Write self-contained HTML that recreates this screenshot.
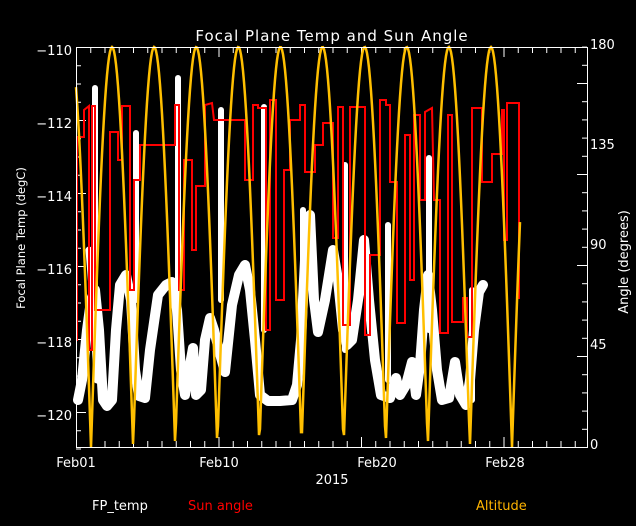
<!DOCTYPE html>
<html><head><style>
html,body{margin:0;padding:0;background:#000;width:636px;height:526px;overflow:hidden}
svg{display:block}
text{font-family:"DejaVu Sans","Liberation Sans",sans-serif;font-size:13px;fill:#fff}
</style></head><body>
<svg id="s" width="636" height="526" xmlns="http://www.w3.org/2000/svg">
<g id="ticks" stroke="#fff" stroke-width="1"></g>
<text x="332" y="41" text-anchor="middle" style="font-size:15px;letter-spacing:1px">Focal Plane Temp and Sun Angle</text>
<g text-anchor="end">
<text x="72" y="55">−110</text>
<text x="72" y="128">−112</text>
<text x="72" y="201">−114</text>
<text x="72" y="274">−116</text>
<text x="72" y="347">−118</text>
<text x="72" y="420">−120</text>
</g>
<text x="590" y="49">180</text>
<text x="590" y="149">135</text>
<text x="590" y="249">90</text>
<text x="590" y="349">45</text>
<text x="590" y="449">0</text>
<text transform="translate(25,238) rotate(-90)" text-anchor="middle" style="font-size:11.5px">Focal Plane Temp (degC)</text>
<text transform="translate(628,262) rotate(-90)" text-anchor="middle">Angle (degrees)</text>
<g text-anchor="middle">
<text x="76" y="467">Feb01</text>
<text x="219" y="467">Feb10</text>
<text x="377" y="467">Feb20</text>
<text x="505" y="467">Feb28</text>
<text x="332" y="484">2015</text>
</g>
<text x="92" y="510">FP_temp</text>
<text x="188" y="510" style="fill:#ff0000">Sun angle</text>
<text x="476" y="510" style="fill:#ffb400">Altitude</text>
<g id="white" fill="none" stroke="#fff" stroke-linejoin="round" stroke-linecap="round">
<polyline stroke-width="10" points="78,400 82,380 87,330 91,300 95,290 99,330 103,400 107,406 112,400 116,330 120,285 126,275 131,300 135,370 139,396 145,398 150,350 158,295 166,285 172,282 177,310 181,370 185,395 189,370 193,348 196,395 201,390 205,340 210,318 214,330 219,350 225,372 232,305 239,275 245,265 250,290 255,340 260,395 268,401 280,401 292,400 297,385 301,340 305,260 310,215 314,300 318,332 325,300 333,250 338,280 343,330 347,345 352,340 358,300 364,240 369,300 375,360 381,395 390,398 396,378 400,395 406,385 412,362 416,395 420,365 424,310 428,275 432,310 437,370 442,400 449,398 455,362 460,395 466,405 470,380 474,330 479,292 483,285"/>
<polyline stroke-width="7" points="89,250 93,300 97,380"/>
<g stroke-width="6">
<line x1="95" y1="88" x2="95" y2="330"/>
<line x1="136" y1="133" x2="136" y2="300"/>
<line x1="178" y1="78" x2="178" y2="330"/>
<line x1="221" y1="110" x2="221" y2="300"/>
<line x1="264" y1="107" x2="264" y2="330"/>
<line x1="303" y1="210" x2="303" y2="330"/>
<line x1="345" y1="165" x2="345" y2="350"/>
<line x1="388" y1="225" x2="388" y2="380"/>
<line x1="429" y1="158" x2="429" y2="330"/>
<line x1="472" y1="290" x2="472" y2="400"/>
</g>
</g>
<polyline id="red" fill="none" stroke="#ff0000" stroke-width="2" points="76,340 77,340 77,137 84,137 84,110 89,106 89,350 92,350 92,106 95,106 95,310 110,310 110,132 118,132 118,160 122,160 122,106 130,106 130,290 134,290 134,180 140,180 140,145 175,145 175,105 179,105 179,290 184,290 184,160 192,160 192,250 196,250 196,186 205,186 205,105 212,103 214,120 245,120 245,180 253,180 253,105 258,105 258,108 266,108 266,330 270,330 270,100 276,100 276,300 284,300 284,170 290,170 290,120 300,120 300,105 305,105 305,172 315,172 315,145 323,145 323,123 333,123 333,238 338,238 338,107 343,107 343,325 350,325 350,107 365,107 365,335 370,335 370,255 380,255 380,100 386,100 386,105 390,105 390,182 397,182 397,323 405,323 405,135 410,135 410,280 414,280 414,115 420,115 420,200 425,200 425,112 432,108 434,200 440,200 440,333 448,333 448,115 452,115 452,322 463,322 463,298 467,298 467,337 472,337 472,108 482,108 482,182 492,182 492,154 502,154 502,110 504,110 504,240 507,240 507,103 519,103 519,298 520,298"/>
<polyline id="alt" fill="none" stroke="#ffbf00" stroke-width="2.5" points=""/>
<rect x="76.5" y="47.5" width="511" height="400" fill="none" stroke="#fff" stroke-width="1"/>
</svg>
<script>
(function(){
var p=[];for(var x=76;x<=520;x+=1){var y=447-400*Math.abs(Math.sin(Math.PI*(x-91)/42.1));p.push(x+","+y.toFixed(1));}
document.getElementById('alt').setAttribute('points',p.join(' '));
var g=document.getElementById('ticks'),s="";
function L(a,b,c,d){s+='<line x1="'+a+'" y1="'+b+'" x2="'+c+'" y2="'+d+'"/>';}
for(var i=0;i<=22;i++){var y=47.5+i*18.25;var big=(i%4==0);L(76,y,big?86:81,y);}
for(var i=0;i<=22;i++){var y=447.5-i*18.2;var big=(i%5==0);L(587,y,big?577:582,y);}
for(var i=0;;i++){var x=76.5+i*14.25;if(x>587)break;var big=(i%10==0);L(x,447,x,big?437:441);L(x,47,x,big?57:53);}
g.innerHTML=s;
})();
</script>
</body></html>
